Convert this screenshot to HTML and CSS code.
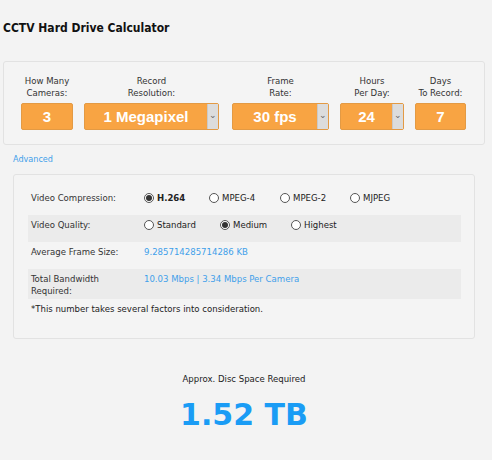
FILE: index.html
```html
<!DOCTYPE html>
<html lang="en">
<head>
  <meta charset="UTF-8">
  <title>CCTV Hard Drive Calculator</title>
  <link rel="stylesheet" href="styles.css">
</head>
<body>

  <h1 class="title">CCTV Hard Drive Calculator</h1>

  <!-- Main inputs -->
  <div class="panel top">
    <div class="field w-cam">
      <label>How Many<br>Cameras:</label>
      <div class="box">3</div>
    </div>
    <div class="field w-res">
      <label>Record<br>Resolution:</label>
      <div class="box select"><span class="val">1 Megapixel</span><span class="arrow">&#8964;</span></div>
    </div>
    <div class="field w-fps">
      <label>Frame<br>Rate:</label>
      <div class="box select"><span class="val">30 fps</span><span class="arrow">&#8964;</span></div>
    </div>
    <div class="field w-hrs">
      <label>Hours<br>Per Day:</label>
      <div class="box select"><span class="val">24</span><span class="arrow">&#8964;</span></div>
    </div>
    <div class="field w-days">
      <label>Days<br>To Record:</label>
      <div class="box">7</div>
    </div>
  </div>

  <a class="advanced" href="#">Advanced</a>

  <!-- Advanced options -->
  <div class="panel adv">
    <div class="row">
      <div class="key">Video Compression:</div>
      <div class="opts">
        <span class="opt o1 on"><i class="radio"></i><b>H.264</b></span>
        <span class="opt o2"><i class="radio"></i>MPEG-4</span>
        <span class="opt o3"><i class="radio"></i>MPEG-2</span>
        <span class="opt"><i class="radio"></i>MJPEG</span>
      </div>
    </div>
    <div class="row shade">
      <div class="key">Video Quality:</div>
      <div class="opts">
        <span class="opt q1"><i class="radio"></i>Standard</span>
        <span class="opt q2 on"><i class="radio"></i>Medium</span>
        <span class="opt"><i class="radio"></i>Highest</span>
      </div>
    </div>
    <div class="row">
      <div class="key">Average Frame Size:</div>
      <div class="link">9.285714285714286 KB</div>
    </div>
    <div class="row shade tall">
      <div class="key">Total Bandwidth<br>Required:</div>
      <div class="link">10.03 Mbps | 3.34 Mbps Per Camera</div>
    </div>
    <p class="note">*This number takes several factors into consideration.</p>
  </div>

  <div class="result">
    <p>Approx. Disc Space Required</p>
    <div class="total">1.52 TB</div>
  </div>

</body>
</html>
```

FILE: styles.css
```css
* { box-sizing: border-box; }

body {
  margin: 0;
  padding: 0;
  background: #f3f3f3;
  color: #222;
  font-family: "DejaVu Sans Condensed", "DejaVu Sans", sans-serif;
  font-size: 9.5px;
}

.title {
  margin: 0;
  padding: 21px 0 0 3px;
  height: 61px;
  font-size: 12px;
  font-weight: bold;
  color: #111;
}

.panel {
  background: #f4f4f4;
  border: 1px solid #e2e2e2;
  border-radius: 3px;
}

/* Top inputs */
.top {
  display: flex;
  margin-left: 3px;
  width: 482px;
  height: 84px;
  padding: 13px 0 0 17px;
}

.field {
  display: flex;
  flex-direction: column;
  align-items: center;
  margin-right: 11px;
}

.field label {
  text-align: center;
  line-height: 12px;
  height: 28px;
  color: #333;
}

.w-cam { width: 52px; }
.w-res { width: 135px; }
.w-fps { width: 97px; margin-left: 2px; }
.w-hrs { width: 64px; }
.w-days { width: 51px; }

.box {
  width: 100%;
  height: 27px;
  background: #f8a443;
  border: 1px solid #e39a44;
  border-radius: 2px;
  color: #fff;
  font-family: "Liberation Sans", Arial, sans-serif;
  font-weight: bold;
  font-size: 15px;
  line-height: 25px;
  text-align: center;
}

.select {
  display: flex;
}

.select .val { flex: 1; }

.select .arrow {
  width: 11px;
  background: #dcdcdc;
  border-left: 1px solid #c9c9c9;
  color: #666;
  font-size: 9px;
  font-weight: normal;
  line-height: 22px;
}

.advanced {
  display: block;
  margin: 9px 0 0 13px;
  height: 20px;
  color: #3fa0ea;
  text-decoration: none;
  font-size: 9px;
}

/* Advanced panel */
.adv {
  margin-left: 13px;
  width: 462px;
  height: 165px;
  padding: 13px 13px 0 14px;
}

.row {
  display: flex;
  height: 27px;
  padding: 4px 3px 0;
  line-height: 12px;
}

.row.shade { background: #ebebeb; }
.row.tall { height: 30px; }

.key { width: 113px; color: #333; }

.opts { display: flex; }

.opt {
  display: flex;
  align-items: center;
  height: 12px;
}

.o1 { width: 65px; }
.o2 { width: 71px; }
.o3 { width: 70px; }
.q1 { width: 76px; }
.q2 { width: 71px; }

.radio {
  width: 10px;
  height: 10px;
  margin-right: 3px;
  border: 1px solid #555;
  border-radius: 50%;
  background: #fff;
  display: flex;
  align-items: center;
  justify-content: center;
}

.opt.on .radio::after {
  content: "";
  width: 6px;
  height: 6px;
  border-radius: 50%;
  background: #333;
}

.link { color: #3fa0ea; }

.note {
  margin: 4px 0 0 3px;
  color: #222;
}

/* Result */
.result {
  width: 488px;
  text-align: center;
  padding-top: 34px;
}

.result p {
  margin: 0;
  font-size: 9.5px;
  color: #222;
}

.total {
  margin-top: 13px;
  font-family: "DejaVu Sans", sans-serif;
  font-weight: bold;
  font-size: 30px;
  color: #1a9cf5;
}
```
